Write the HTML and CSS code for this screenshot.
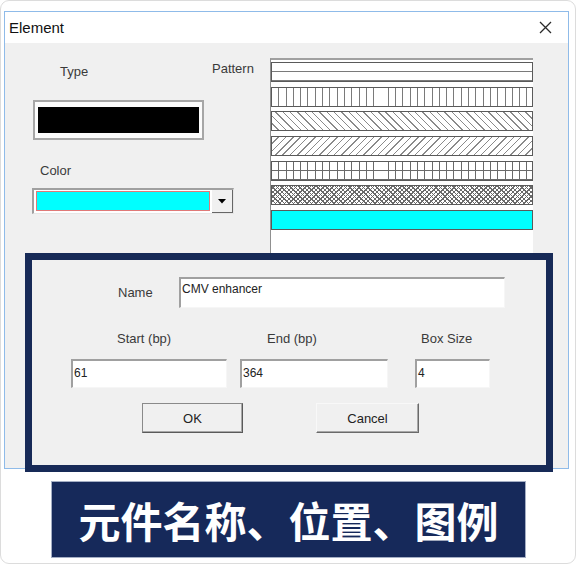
FILE: index.html
```html
<!DOCTYPE html>
<html lang="en">
<head>
    <meta charset="UTF-8">
    <meta name="viewport" content="width=device-width, initial-scale=1.0">
    <title>Element</title>
    <link rel="stylesheet" href="styles.css">
</head>
<body>
    <div class="frame">
        <!-- Element dialog -->
        <div class="dialog">
            <div class="titlebar">
                <span class="title">Element</span>
                <svg class="close" width="13" height="13" viewBox="0 0 13 13">
                    <path d="M1 1L12 12M12 1L1 12" stroke="#2a2a2a" stroke-width="1.3" fill="none"/>
                </svg>
            </div>

            <div class="dialog-body">
                <section class="top">
                    <div class="left-col">
                        <div class="label type-label">Type</div>
                        <div class="type-box"><div class="type-fill"></div></div>
                        <div class="label color-label">Color</div>
                        <div class="combo">
                            <div class="combo-value"></div>
                            <div class="combo-btn">
                                <svg width="8" height="5" viewBox="0 0 8 5"><path d="M0 0H8L4 4.5Z" fill="#000"/></svg>
                            </div>
                        </div>
                    </div>
                    <div class="pattern-col">
                        <div class="label pattern-label">Pattern</div>
                        <div class="pattern-list">
                            <div class="swatch hatch-h"></div>
                            <div class="swatch hatch-v"></div>
                            <div class="swatch hatch-bdiag"></div>
                            <div class="swatch hatch-fdiag"></div>
                            <div class="swatch hatch-cross"></div>
                            <div class="swatch hatch-diagcross"></div>
                            <div class="swatch solid-cyan"></div>
                        </div>
                    </div>
                </section>

                <!-- highlighted part of the dialog -->
                <section class="highlight">
                    <div class="name-row">
                        <div class="label name-label">Name</div>
                        <div class="field name-field">CMV enhancer</div>
                    </div>
                    <div class="pos-row">
                        <div class="pos start">
                            <div class="label">Start (bp)</div>
                            <div class="field">61</div>
                        </div>
                        <div class="pos end">
                            <div class="label">End (bp)</div>
                            <div class="field">364</div>
                        </div>
                        <div class="pos size">
                            <div class="label">Box Size</div>
                            <div class="field">4</div>
                        </div>
                    </div>
                    <div class="buttons">
                        <button type="button" class="btn btn-ok">OK</button>
                        <button type="button" class="btn btn-cancel">Cancel</button>
                    </div>
                </section>
            </div>
        </div>

        <div class="caption">元件名称、位置、图例</div>
    </div>
</body>
</html>
```

FILE: styles.css
```css
/* page */
body {
    margin: 0;
    background: #fff;
    font-family: "Liberation Sans", Arial, sans-serif;
    color: #333;
}

.frame {
    box-sizing: border-box;
    width: 576px;
    height: 564px;
    border: 1px solid #dcdcdc;
    border-radius: 9px;
    padding: 10px 0 0 3px;
}

/* dialog window */
.dialog {
    box-sizing: border-box;
    width: 565px;
    height: 458px;
    border: 1px solid #8fbbe9;
    background: #f0f0f0;
}

.titlebar {
    height: 31px;
    background: #fff;
    display: flex;
    align-items: center;
    justify-content: space-between;
    padding: 0 16px 0 4px;
}

.title {
    font-size: 15px;
    color: #111;
}

.label {
    font-size: 13px;
    line-height: 16px;
    color: #3a3a3a;
}

/* type / colour / pattern */
.top {
    display: flex;
    height: 210px;
}

.left-col {
    width: 179px;
    padding-left: 28px;
}

.type-label {
    margin: 21px 0 0 27px;
}

.type-box {
    box-sizing: border-box;
    width: 171px;
    height: 40px;
    margin-top: 20px;
    border: 2px solid #a6a6a6;
    padding: 5px 3px;
    background: #fbfbfb;
}

.type-fill {
    height: 100%;
    background: #000;
}

.color-label {
    margin: 23px 0 0 7px;
}

.combo {
    box-sizing: border-box;
    display: flex;
    width: 202px;
    height: 26px;
    margin: 9px 0 0 -1px;
    border-top: 2px solid #a0a0a0;
    border-left: 2px solid #a0a0a0;
    border-right: 1px solid #e6e6e6;
    border-bottom: 1px solid #e6e6e6;
    background: #fff;
    padding: 1px 0 0 2px;
}

.combo-value {
    flex: 1;
    height: 20px;
    background: #00ffff;
    border: 1px solid #e07a78;
    box-sizing: border-box;
}

.combo-btn {
    box-sizing: border-box;
    width: 21px;
    height: 23px;
    margin: -1px 0 0 2px;
    background: #f0f0f0;
    border-right: 1px solid #666;
    border-bottom: 1px solid #666;
    display: flex;
    align-items: center;
    justify-content: center;
}

.pattern-col {
    display: flex;
    padding-top: 15px;
}

.pattern-label {
    width: 58px;
    margin-top: 3px;
}

.pattern-list {
    box-sizing: border-box;
    width: 263px;
    height: 195px;
    background: #fff;
    border-top: 2px solid #a0a0a0;
    border-left: 1px solid #909090;
    padding-top: 2px;
}

.swatch {
    box-sizing: border-box;
    height: 20px;
    margin-bottom: 4.7px;
    border: 1px solid #5a5a5a;
    background-color: #fff;
}

.hatch-h {
    background-image: repeating-linear-gradient(to bottom, #fff 0 8px, #7a7a7a 8px 9px);
}

.hatch-v {
    background-image: repeating-linear-gradient(to right, #fff 0 6.3px, #7a7a7a 6.3px 7.3px);
}

.hatch-bdiag {
    background-image: repeating-linear-gradient(45deg, #fff 0 4.2px, #8a8a8a 4.2px 5.2px);
}

.hatch-fdiag {
    background-image: repeating-linear-gradient(-45deg, #fff 0 4.2px, #8a8a8a 4.2px 5.2px);
}

.hatch-cross {
    background-image:
        repeating-linear-gradient(to right, transparent 0 6.3px, #6a6a6a 6.3px 7.3px),
        repeating-linear-gradient(to bottom, transparent 0 8px, #6a6a6a 8px 9px);
}

.hatch-diagcross {
    background-image:
        repeating-linear-gradient(45deg, transparent 0 2.2px, #6a6a6a 2.2px 3.2px),
        repeating-linear-gradient(-45deg, transparent 0 2.2px, #6a6a6a 2.2px 3.2px);
}

.solid-cyan {
    background: #00ffff;
}

/* name / position block with the navy outline */
.highlight {
    position: relative;
    box-sizing: border-box;
    width: 528px;
    height: 219px;
    margin-left: 20px;
    border: 7px solid #172a57;
    background: #f0f0f0;
}

.name-row {
    display: flex;
    align-items: center;
    margin-top: 17px;
    padding-left: 86px;
}

.name-label {
    width: 61px;
}

.field {
    box-sizing: border-box;
    height: 29px;
    background: #fff;
    border-top: 2px solid #a0a0a0;
    border-left: 2px solid #a0a0a0;
    border-right: 1px solid #f6f6f6;
    border-bottom: 1px solid #f6f6f6;
    padding: 5px 1px 0;
    font-size: 12px;
    line-height: 14px;
    color: #222;
}

.name-field {
    width: 326px;
    height: 31px;
    padding-top: 3px;
}

.pos-row {
    display: flex;
    margin-top: 23px;
    padding-left: 39px;
}

.pos .field {
    margin-top: 12px;
}

.start { width: 156px; }
.start .label { margin-left: 46px; }

.end { width: 148px; margin-left: 13px; }
.end .label { margin-left: 27px; }

.size { width: 75px; margin-left: 27px; }
.size .label { margin-left: 6px; }

.buttons {
    display: flex;
    gap: 73px;
    margin-top: 15px;
    padding-left: 110px;
}

.btn {
    height: 30px;
    padding: 0;
    font-family: "Liberation Sans", Arial, sans-serif;
    font-size: 13px;
    color: #222;
    background: #f0f0f0;
    border: 1px solid;
    border-color: #f8f8f8 #6a6a6a #6a6a6a #f8f8f8;
    box-shadow: inset -1px -1px #a8a8a8;
}

.btn-ok {
    width: 101px;
    border-color: #8a8a8a #5a5a5a #5a5a5a #8a8a8a;
}

.btn-cancel {
    width: 103px;
}

/* caption under the dialog */
.caption {
    box-sizing: border-box;
    width: 475px;
    height: 77px;
    margin: 12px 0 0 47px;
    background: #16295a;
    border: 1px solid #a4aec4;
    color: #fff;
    font-family: "Noto Sans CJK SC", sans-serif;
    font-weight: 700;
    font-size: 42px;
    line-height: 75px;
    text-align: center;
}
```
